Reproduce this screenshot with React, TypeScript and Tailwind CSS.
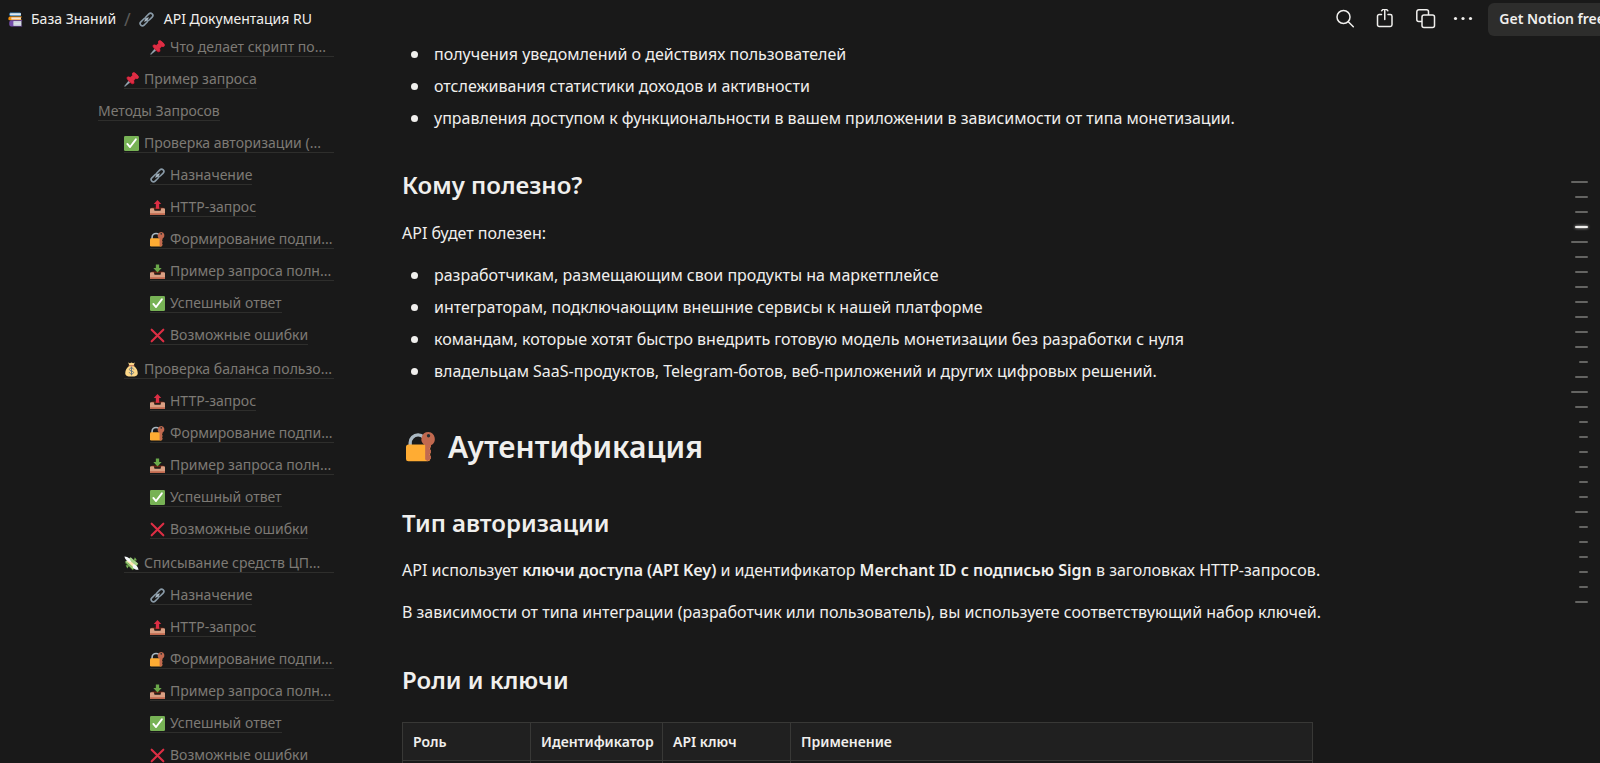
import React from "react";

type IconName =
  | "books"
  | "link"
  | "pin"
  | "check"
  | "outbox"
  | "inbox"
  | "lock"
  | "cross"
  | "moneybag"
  | "moneywings";

interface TocItem {
  icon?: IconName;
  text: string;
  level: 0 | 1 | 2;
}

const Emoji: React.FC<{ name: IconName; className?: string }> = ({
  name,
  className = "",
}) => (
  <svg viewBox="0 0 36 36" className={`shrink-0 ${className}`} aria-hidden="true">
    {name === "books" && (
      <>
        <path d="M5 1h24l2 2v7H7a4 4 0 0 1-4-4V4z" fill="#3b88c3" />
        <path d="M7 3h24v5H7a2.500 2.500 0 0 1 0-5z" fill="#e1e8ed" />
        <path d="M1 15a4 4 0 0 1 4-4h28v2h-2v5h2v2H5a4 4 0 0 1-4-5z" fill="#f4900c" />
        <path d="M8 13h23v5H8z" fill="#f5e3d2" />
        <path d="M8 20h26v2h-2v11h2v2H8a5 5 0 0 1-5-5v-5a5 5 0 0 1 5-5z" fill="#744eaa" />
        <path d="M13 22h19v11H13z" fill="#e1e8ed" />
        <path d="M13 25.500h19M13 29.500h19" stroke="#aab8c2" />
      </>
    )}
    {name === "link" && (
      <g fill="none" stroke="#8899a6" strokeWidth="4">
        <rect x="-10" y="-5.500" width="20" height="11" rx="5.500" transform="translate(24.500 11.500) rotate(-45)" />
        <rect x="-10" y="-5.500" width="20" height="11" rx="5.500" transform="translate(11.500 24.500) rotate(-45)" />
        <path d="M14 22l8-8" stroke="#b5c2cb" strokeWidth="3" strokeLinecap="round" />
      </g>
    )}
    {name === "pin" && (
      <>
        <path d="M2 35L1 34 13 19l4 4z" fill="#99aab5" stroke="#99aab5" />
        <path d="M20 3c2-3 5-3 8 0l5 5c3 3 3 6 0 8-1 1-3 1-5 0l-4 5c2 4 1 7-1 8-2 1-5 0-9-4l-4-4c-4-4-5-7-3-9 1-2 4-2 8 0l5-4c-1-2-1-4 0-5z" fill="#be1931" />
        <path d="M21 2c2-2 5-1 8 2l4 4c3 3 3 6 1 7-2 2-5 1-8-2l-4-4c-3-3-3-6-1-7zM9 12c2-2 5 0 9 3l4 5c3 3 2 5 1 6-2 2-5 0-9-3l-3-3c-3-3-4-6-2-8z" fill="#dd2e44" />
        <path d="M15 13l6-5 7 7-6 6z" fill="#dd2e44" />
      </>
    )}
    {name === "check" && (
      <>
        <rect width="36" height="36" rx="3" fill="#77b255" />
        <path d="M8 19l6.500 7.500L28.500 8" fill="none" stroke="#fff" strokeWidth="4.500" strokeLinecap="round" strokeLinejoin="round" />
      </>
    )}
    {name === "cross" && (
      <path d="M4 4l28 28M32 4L4 32" stroke="#dd2e44" strokeWidth="5" strokeLinecap="round" />
    )}
    {(name === "outbox" || name === "inbox") && (
      <>
        <path d="M4 18h28l2 4H2z" fill="#662113" />
        <path d="M0 22c0-1 1-2 2-2h6c1 0 2 1 2 2v2c0 1 1 2 2 2h12c1 0 2-1 2-2v-2c0-1 1-2 2-2h6c1 0 2 1 2 2v11c0 2-1 3-3 3H3c-2 0-3-1-3-3z" fill="#d99e82" />
        <path d="M0 32h36v1c0 2-1 3-3 3H3c-2 0-3-1-3-3z" fill="#c1694f" />
      </>
    )}
    {name === "outbox" && (
      <path d="M18 0l9 9.500h-5V21h-8V9.500H9z" fill="#dd2e44" />
    )}
    {name === "inbox" && (
      <path d="M14 1h8v8.500h6L18 20.500 8 9.500h6z" fill="#6aa84a" />
    )}
    {name === "lock" && (
      <>
        <path d="M5 18v-5a9.500 9.500 0 0 1 19 0v5" fill="none" stroke="#aab8c2" strokeWidth="4" />
        <rect x="0" y="15" width="29" height="20" rx="3" fill="#ffac33" />
        <path d="M27 0a8.500 8.500 0 0 0-4 16v17l3 2 4-3v-3l-2-2 2-2v-3l-2-2 2-2v-2A8.500 8.500 0 0 0 27 0z" fill="#c1694f" />
        <circle cx="27" cy="4.500" r="2" fill="#292f33" />
      </>
    )}
    {name === "moneybag" && (
      <>
        <path d="M10 1l4 2 4-2 4 2 4-2-3 8c6 4 10 11 10 18 0 6-5 8-15 8S3 33 3 27C3 20 7 13 13 9z" fill="#fdd888" />
        <path d="M12 9h12" stroke="#bf6952" strokeWidth="2.500" strokeLinecap="round" />
        <path d="M23 17c-1-2-3-2.500-5-2.500-3 0-5 1-5 3.500 0 5 10 2.500 10 7 0 2.500-2 3.500-5 3.500-2 0-4-.8-5-2.800M18 12v19" fill="none" stroke="#67757f" strokeWidth="2.400" strokeLinecap="round" />
      </>
    )}
    {name === "moneywings" && (
      <>
        <path d="M2 16L16 4l18 16-13 14z" fill="#5c913b" />
        <path d="M3 13L16 3l18 15-13 13z" fill="#a7d28b" />
        <path d="M8 16l13 12 5-5L13 11z" fill="#77b255" />
        <path d="M7 13l5-4 19 16-5 5z" fill="#ffe8b6" />
        <path d="M1 1c6 0 10 2 13 6l3 8C10 13 3 10 1 1zM22 20c6 1 11 4 13 13-6 1-12-2-14-6z" fill="#f5f8fa" />
        <path d="M26 3l5 7-8 2zM4 22l8 1-4 7z" fill="#77b255" />
      </>
    )}
  </svg>
);

const tocSections: TocItem[][] = [
  [
    { icon: "pin", text: "Что делает скрипт по...", level: 2 },
    { icon: "pin", text: "Пример запроса", level: 1 },
    { text: "Методы Запросов", level: 0 },
    { icon: "check", text: "Проверка авторизации (...", level: 1 },
    { icon: "link", text: "Назначение", level: 2 },
    { icon: "outbox", text: "HTTP-запрос", level: 2 },
    { icon: "lock", text: "Формирование подпи...", level: 2 },
    { icon: "inbox", text: "Пример запроса полн...", level: 2 },
    { icon: "check", text: "Успешный ответ", level: 2 },
    { icon: "cross", text: "Возможные ошибки", level: 2 },
  ],
  [
    { icon: "moneybag", text: "Проверка баланса пользо...", level: 1 },
    { icon: "outbox", text: "HTTP-запрос", level: 2 },
    { icon: "lock", text: "Формирование подпи...", level: 2 },
    { icon: "inbox", text: "Пример запроса полн...", level: 2 },
    { icon: "check", text: "Успешный ответ", level: 2 },
    { icon: "cross", text: "Возможные ошибки", level: 2 },
  ],
  [
    { icon: "moneywings", text: "Списывание средств ЦП...", level: 1 },
    { icon: "link", text: "Назначение", level: 2 },
    { icon: "outbox", text: "HTTP-запрос", level: 2 },
    { icon: "lock", text: "Формирование подпи...", level: 2 },
    { icon: "inbox", text: "Пример запроса полн...", level: 2 },
    { icon: "check", text: "Успешный ответ", level: 2 },
    { icon: "cross", text: "Возможные ошибки", level: 2 },
  ],
];

const levelPadding = ["pl-0", "pl-[26px]", "pl-[52px]"];

const outline = "LMMMLMMMMMMMSMLMSSSSSSMSSSSSM".split("");
const ACTIVE_TICK = 3;
const tickWidth: Record<string, string> = {
  L: "w-[17px]",
  M: "w-[13px]",
  S: "w-[9px]",
};

const Header: React.FC = () => (
  <header className="flex h-[38px] shrink-0 items-center justify-between overflow-hidden pl-2 text-[14px] leading-5 text-[#f0efed]">
    <nav className="flex items-center">
      <a href="#base" className="flex items-center gap-2 whitespace-nowrap">
        <Emoji name="books" className="size-[15px]" />
        База Знаний
      </a>
      <span className="px-2 text-[18px] text-[#5a5a58]">/</span>
      <a href="#docs" className="flex items-center gap-[10px] whitespace-nowrap">
        <Emoji name="link" className="size-[15px]" />
        API Документация RU
      </a>
    </nav>

    <div className="-mr-4 flex shrink-0 items-center">
      <button aria-label="Search" className="px-[10px]">
        <svg viewBox="0 0 20 20" className="size-5" fill="none" stroke="currentColor" strokeWidth="1.500" strokeLinecap="round">
          <circle cx="7.500" cy="8" r="6.500" />
          <path d="M12.300 12.800l5 5" />
        </svg>
      </button>
      <button aria-label="Share" className="px-[10px]">
        <svg viewBox="0 0 20 20" className="size-5" fill="none" stroke="currentColor" strokeWidth="1.500" strokeLinecap="round" strokeLinejoin="round">
          <path d="M5.500 6H3.200A1.700 1.700 0 0 0 1.500 7.700v8.600A1.700 1.700 0 0 0 3.200 18h11.100a1.700 1.700 0 0 0 1.700-1.700V7.700A1.700 1.700 0 0 0 14.300 6H12M8.750 11V-.5M5.700 2.200l3.050-3 3.050 3" overflow="visible" transform="translate(0 -.5)" />
        </svg>
      </button>
      <button aria-label="Duplicate" className="px-[10px]">
        <svg viewBox="0 0 20 20" className="size-5" fill="none" stroke="currentColor" strokeWidth="1.500" strokeLinejoin="round">
          <rect x="6" y="6" width="12.500" height="12.500" rx="2" />
          <path d="M6 12.500H2.800A2 2 0 0 1 .8 10.500V2.800a2 2 0 0 1 2-2h7.700a2 2 0 0 1 2 2V6" />
        </svg>
      </button>
      <button aria-label="More" className="pl-[7px] pr-[15px]">
        <svg viewBox="0 0 20 20" className="size-5" fill="currentColor">
          <circle cx="2.500" cy="9.500" r="1.600" />
          <circle cx="10" cy="9.500" r="1.600" />
          <circle cx="17.500" cy="9.500" r="1.600" />
        </svg>
      </button>
      <button className="h-[33px] whitespace-nowrap rounded-md bg-[#2d2d2c] px-[11px] font-semibold">
        Get Notion free
      </button>
    </div>
  </header>
);

const TableOfContents: React.FC = () => (
  <aside className="w-[334px] shrink-0 overflow-hidden pl-[98px] text-[14px] leading-[18px] text-[#7d7a75]">
    {tocSections.map((section, i) => (
      <ul key={i} className={i > 0 ? "pt-0.5" : ""}>
        {section.map((item, j) => (
          <li key={j} className={`flex h-8 items-start ${levelPadding[item.level]}`}>
            <a
              href="#section"
              className={`flex items-center gap-[5px] border-b border-[#2e2e2c] whitespace-nowrap ${
                item.text.endsWith("...") ? "w-full" : ""
              }`}
            >
              {item.icon && <Emoji name={item.icon} className="size-[15px]" />}
              {item.text}
            </a>
          </li>
        ))}
      </ul>
    ))}
  </aside>
);

const BulletList: React.FC<{ items: string[] }> = ({ items }) => (
  <ul>
    {items.map((item) => (
      <li key={item} className="flex items-center pl-[9px]">
        <span className="mr-4 size-[7px] shrink-0 rounded-full bg-[#f0efed]" />
        {item}
      </li>
    ))}
  </ul>
);

const App: React.FC = () => {
  return (
    <div className="flex h-screen flex-col overflow-hidden bg-[#191919] font-['Noto_Sans',sans-serif] text-[#f0efed]">
      <Header />
      <div className="flex min-h-0 flex-1">
        <TableOfContents />

        <main className="min-w-0 flex-1 overflow-hidden pl-[68px] text-[16px] leading-8">
          <BulletList
            items={[
              "получения уведомлений о действиях пользователей",
              "отслеживания статистики доходов и активности",
              "управления доступом к функциональности в вашем приложении в зависимости от типа монетизации.",
            ]}
          />

          <h2 className="mt-[35px] text-[24px] font-semibold">Кому полезно?</h2>
          <p className="mt-4 mb-[10px]">API будет полезен:</p>
          <BulletList
            items={[
              "разработчикам, размещающим свои продукты на маркетплейсе",
              "интеграторам, подключающим внешние сервисы к нашей платформе",
              "командам, которые хотят быстро внедрить готовую модель монетизации без разработки с нуля",
              "владельцам SaaS-продуктов, Telegram-ботов, веб-приложений и других цифровых решений.",
            ]}
          />

          <h1 className="mt-10 flex items-center gap-3 pl-1 text-[30px] leading-10 font-semibold">
            <Emoji name="lock" className="size-[30px]" />
            Аутентификация
          </h1>

          <h2 className="mt-10 text-[24px] font-semibold">Тип авторизации</h2>
          <p className="mt-[15px]">
            API использует <b className="font-semibold">ключи доступа (API Key)</b> и
            идентификатор{" "}
            <b className="font-semibold">Merchant ID с подписью Sign</b> в заголовках
            HTTP-запросов.
          </p>
          <p className="mt-[10px]">
            В зависимости от типа интеграции (разработчик или пользователь), вы
            используете соответствующий набор ключей.
          </p>

          <h2 className="mt-9 text-[24px] font-semibold">Роли и ключи</h2>
          <table className="mt-[26px] w-[911px] table-fixed border-collapse text-left text-[14px] leading-[21px]">
            <colgroup>
              <col className="w-[128px]" />
              <col className="w-[132px]" />
              <col className="w-[128px]" />
              <col />
            </colgroup>
            <thead>
              <tr className="bg-[#202020]">
                {["Роль", "Идентификатор", "API ключ", "Применение"].map((col) => (
                  <th
                    key={col}
                    className="h-[38px] border border-[#383836] px-[10px] font-semibold"
                  >
                    {col}
                  </th>
                ))}
              </tr>
            </thead>
            <tbody>
              <tr>
                {[0, 1, 2, 3].map((i) => (
                  <td key={i} className="h-[38px] border border-[#383836]" />
                ))}
              </tr>
            </tbody>
          </table>
        </main>

        {/* Page outline ticks */}
        <div className="flex w-[60px] shrink-0 flex-col items-end gap-[13px] pt-[143px] pr-3">
          {outline.map((size, i) => (
            <span
              key={i}
              className={`h-[2px] shrink-0 rounded-full ${tickWidth[size]} ${
                i === ACTIVE_TICK
                  ? "bg-[#f0efed] shadow-[0_0_3px_#f0efed]"
                  : "bg-[#646462]"
              }`}
            />
          ))}
        </div>
      </div>
    </div>
  );
};

export default App;
